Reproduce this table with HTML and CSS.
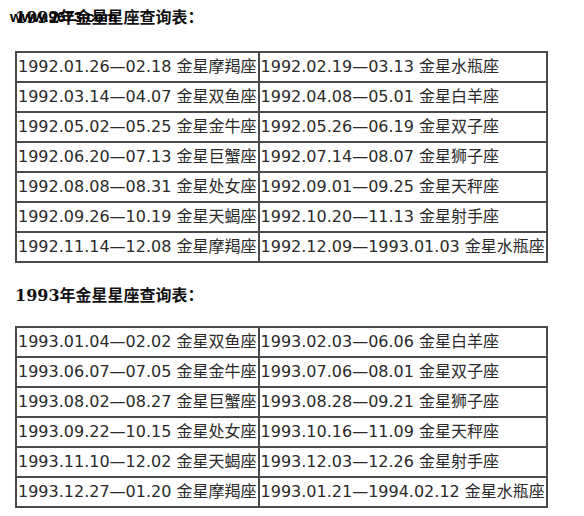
FILE: index.html
```html
<!DOCTYPE html>
<html lang="zh-CN">
<head>
<meta charset="utf-8">
<title>金星星座查询表</title>
<link rel="stylesheet" href="styles.css">
</head>
<body>
<div class="page">
  <div class="title-wrap">
    <h2 class="title title-first">1992年金星星座查询表：</h2>
    <span class="watermark">www.9673.com</span>
  </div>
  <table class="grid grid-first">
    <tr><td>1992.01.26—02.18 金星摩羯座</td><td>1992.02.19—03.13 金星水瓶座</td></tr>
    <tr><td>1992.03.14—04.07 金星双鱼座</td><td>1992.04.08—05.01 金星白羊座</td></tr>
    <tr><td>1992.05.02—05.25 金星金牛座</td><td>1992.05.26—06.19 金星双子座</td></tr>
    <tr><td>1992.06.20—07.13 金星巨蟹座</td><td>1992.07.14—08.07 金星狮子座</td></tr>
    <tr><td>1992.08.08—08.31 金星处女座</td><td>1992.09.01—09.25 金星天秤座</td></tr>
    <tr><td>1992.09.26—10.19 金星天蝎座</td><td>1992.10.20—11.13 金星射手座</td></tr>
    <tr><td>1992.11.14—12.08 金星摩羯座</td><td>1992.12.09—1993.01.03 金星水瓶座</td></tr>
  </table>
  <h2 class="title title-second">1993年金星星座查询表：</h2>
  <table class="grid">
    <tr><td>1993.01.04—02.02 金星双鱼座</td><td>1993.02.03—06.06 金星白羊座</td></tr>
    <tr><td>1993.06.07—07.05 金星金牛座</td><td>1993.07.06—08.01 金星双子座</td></tr>
    <tr><td>1993.08.02—08.27 金星巨蟹座</td><td>1993.08.28—09.21 金星狮子座</td></tr>
    <tr><td>1993.09.22—10.15 金星处女座</td><td>1993.10.16—11.09 金星天秤座</td></tr>
    <tr><td>1993.11.10—12.02 金星天蝎座</td><td>1993.12.03—12.26 金星射手座</td></tr>
    <tr><td>1993.12.27—01.20 金星摩羯座</td><td>1993.01.21—1994.02.12 金星水瓶座</td></tr>
  </table>
</div>
</body>
</html>
```
FILE: styles.css
```css
html, body {
  margin: 0;
  padding: 0;
  background: #ffffff;
}

.page {
  padding: 0 0 0 15px;
}

.title-wrap {
  position: relative;
}

.title {
  margin: 0;
  font-family: "DejaVu Serif", "Noto Sans CJK SC", serif;
  font-weight: bold;
  font-size: 16px;
  line-height: 24px;
  color: #111;
}

.title-first {
  padding-top: 6px;
  margin-bottom: 21px;
}

.title-second {
  margin-top: 21px;
  margin-bottom: 18px;
}

.watermark {
  position: absolute;
  left: -5px;
  top: 8px;
  font-family: "Liberation Sans", Arial, sans-serif;
  font-weight: bold;
  font-size: 15px;
  line-height: 18px;
  color: #000;
}

.grid {
  border-collapse: collapse;
  border: 2px solid #4a4a4a;
}

.grid td {
  border: 2px solid #4a4a4a;
  padding: 3px 1px;
  font-family: "DejaVu Sans", "Noto Sans CJK SC", sans-serif;
  font-size: 16px;
  line-height: 22px;
  color: #2a2a2a;
  white-space: nowrap;
}
```
